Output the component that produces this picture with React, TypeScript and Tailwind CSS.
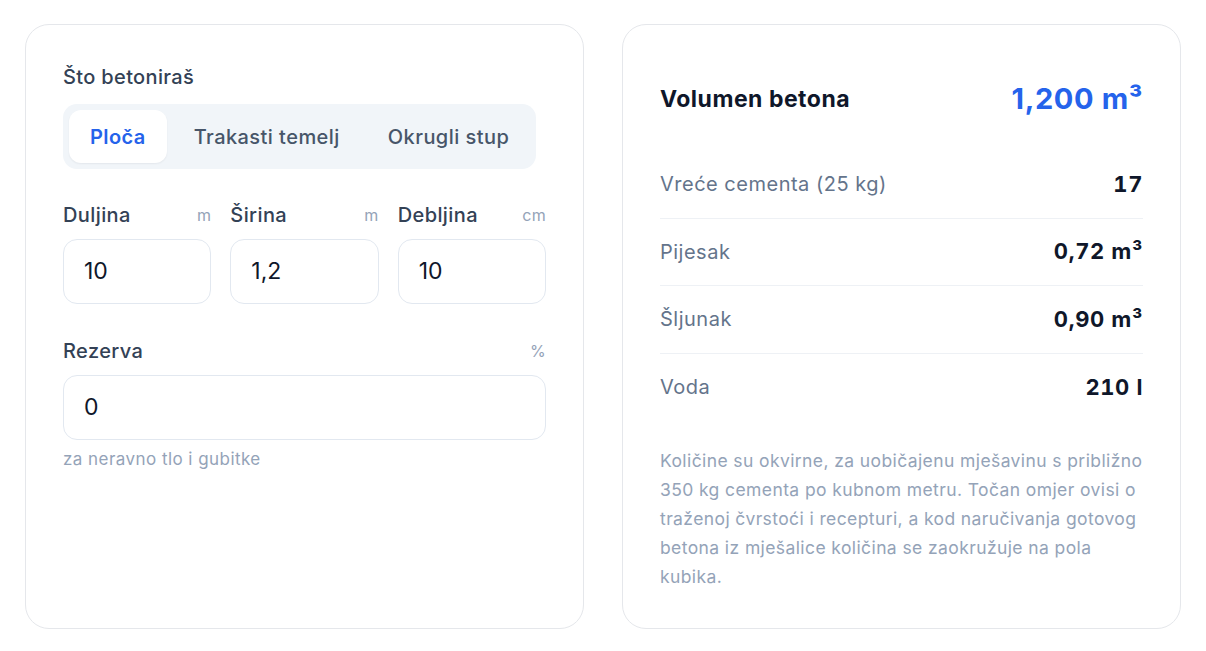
import React from "react";

const font = { fontFamily: "Inter, 'Noto Sans', sans-serif" };

function Field({ label, unit, value }: { label: string; unit: string; value: string }) {
  return (
    <div className="flex flex-col">
      <div className="flex h-[28px] items-center justify-between">
        <span className="text-[20px] font-medium tracking-[0.4px] text-[#334155]">{label}</span>
        <span className="text-[16px] tracking-[0.3px] text-[#94a3b8]">{unit}</span>
      </div>
      <div className="mt-[10px] flex h-[65px] items-center rounded-[14px] border border-[#e2e8f0] bg-white px-[20px] text-[23px] text-[#0f172a]">
        {value}
      </div>
    </div>
  );
}

function Row({ label, value, last }: { label: string; value: React.ReactNode; last?: boolean }) {
  return (
    <div className={`flex h-[67.5px] items-center justify-between ${last ? "" : "border-b border-[#eef1f5]"}`}>
      <span className="text-[20px] tracking-[0.5px] text-[#64748b]">{label}</span>
      <span className="text-[22px] font-bold tabular-nums tracking-[0.6px] text-[#0f172a]">{value}</span>
    </div>
  );
}

export default function App() {
  return (
    <div className="min-h-screen bg-white px-[25px] py-[24px]" style={font}>
      <div className="grid grid-cols-2 gap-[38px]">
        <div className="rounded-[24px] border border-[#e5e7eb] bg-white px-[37px] pt-[37px] pb-[37px]">
          <div className="flex h-[30px] items-center text-[20px] font-medium tracking-[0.35px] text-[#334155]">Što betoniraš</div>
          <div className="mt-[12px] inline-flex gap-[6px] rounded-[14px] bg-[#f1f5f9] p-[6px]">
            <div className="flex h-[53px] items-center rounded-[12px] bg-white px-[21px] text-[20px] font-semibold tracking-[0.4px] text-[#2563eb] shadow-[0_1px_2px_rgba(15,23,42,0.06)]">
              Ploča
            </div>
            <div className="flex h-[53px] items-center px-[21px] text-[20px] font-medium tracking-[0.45px] text-[#475569]">Trakasti temelj</div>
            <div className="flex h-[53px] items-center px-[21px] text-[20px] font-medium tracking-[0.45px] text-[#475569]">Okrugli stup</div>
          </div>
          <div className="mt-[32px] grid grid-cols-3 gap-[19px]">
            <Field label="Duljina" unit="m" value="10" />
            <Field label="Širina" unit="m" value="1,2" />
            <Field label="Debljina" unit="cm" value="10" />
          </div>
          <div className="mt-[33px]">
            <Field label="Rezerva" unit="%" value="0" />
          </div>
          <div className="mt-[8px] text-[17px] leading-[22px] tracking-[0.45px] text-[#94a3b8]">za neravno tlo i gubitke</div>
        </div>

        <div className="rounded-[24px] border border-[#e5e7eb] bg-white px-[37px] pt-[37px] pb-[37px]">
          <div className="flex h-[74px] items-center justify-between">
            <span className="text-[23px] font-bold tracking-[0.5px] text-[#0f172a]">Volumen betona</span>
            <span className="text-[29px] font-bold tracking-[0.6px] text-[#2563eb]">1,200 m³</span>
          </div>
          <div className="mt-[15px]">
            <Row label="Vreće cementa (25 kg)" value="17" />
            <Row label="Pijesak" value="0,72 m³" />
            <Row label="Šljunak" value="0,90 m³" />
            <Row label="Voda" value="210 l" last />
          </div>
          <p className="mt-[25px] text-[17.5px] leading-[29px] tracking-[0.4px] text-[#94a3b8]">
            Količine su okvirne, za uobičajenu mješavinu s približno 350 kg cementa po kubnom metru. Točan omjer ovisi o
            traženoj čvrstoći i recepturi, a kod naručivanja gotovog betona iz mješalice količina se zaokružuje na pola
            kubika.
          </p>
        </div>
      </div>
    </div>
  );
}
